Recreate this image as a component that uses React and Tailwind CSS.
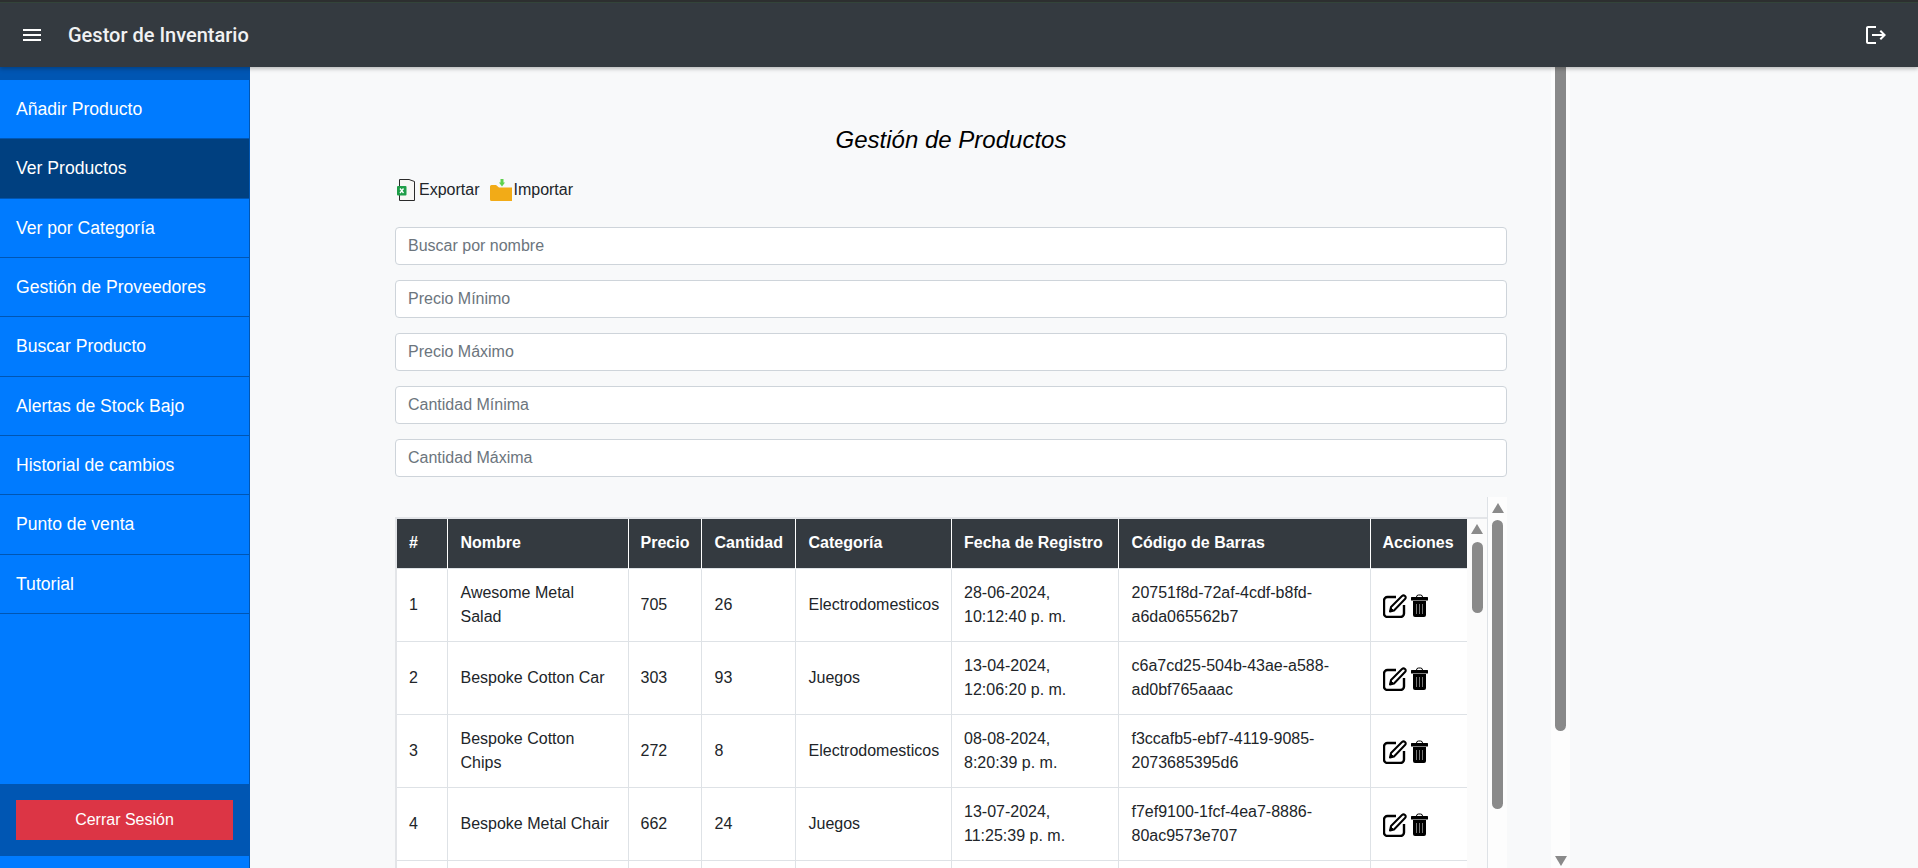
import { MdMenu, MdLogout } from 'react-icons/md'

const menu = [
  'Añadir Producto',
  'Ver Productos',
  'Ver por Categoría',
  'Gestión de Proveedores',
  'Buscar Producto',
  'Alertas de Stock Bajo',
  'Historial de cambios',
  'Punto de venta',
  'Tutorial'
]

const filters = ['Buscar por nombre', 'Precio Mínimo', 'Precio Máximo', 'Cantidad Mínima', 'Cantidad Máxima']

const columns = [
  ['#', 'w-[50px] pl-3'],
  ['Nombre', 'w-[181px] pl-[13px]'],
  ['Precio', 'w-[73px] pl-3'],
  ['Cantidad', 'w-[94px] pl-[13px]'],
  ['Categoría', 'w-[156px] pl-[13px]'],
  ['Fecha de Registro', 'w-[167px] pl-[12.5px]'],
  ['Código de Barras', 'w-[252px] pl-[13px]'],
  ['Acciones', 'w-[97px] pl-3']
]

const products = [
  ['1', 'Awesome Metal Salad', '705', '26', 'Electrodomesticos', '28-06-2024, 10:12:40 p. m.', '20751f8d-72af-4cdf-b8fd-a6da065562b7'],
  ['2', 'Bespoke Cotton Car', '303', '93', 'Juegos', '13-04-2024, 12:06:20 p. m.', 'c6a7cd25-504b-43ae-a588-ad0bf765aaac'],
  ['3', 'Bespoke Cotton Chips', '272', '8', 'Electrodomesticos', '08-08-2024, 8:20:39 p. m.', 'f3ccafb5-ebf7-4119-9085-2073685395d6'],
  ['4', 'Bespoke Metal Chair', '662', '24', 'Juegos', '13-07-2024, 11:25:39 p. m.', 'f7ef9100-1fcf-4ea7-8886-80ac9573e707']
]

function ExcelIcon() {
  return (
    <svg width="20" height="24" viewBox="0 0 20 24">
      <path d="M4.5 1.5 H14 L19.5 3.5 V22.5 H4.5 Z" fill="#f7f7f5" stroke="#2a2a2a" strokeWidth="1" />
      <rect x="2" y="8" width="9.5" height="9.5" rx="1" fill="#1e9e48" />
      <path d="M5 10.5 L8.5 15 M8.5 10.5 L5 15" stroke="#fff" strokeWidth="1.3" />
    </svg>
  )
}

function FolderIcon() {
  return (
    <svg width="22" height="24" viewBox="0 0 22 24">
      <path d="M0 8.5 Q0 7 1.5 7 H6 L9 9.5 H22 V23 H1.5 Q0 23 0 21.5 Z" fill="#f2ab17" />
      <path d="M10.5 1 H13.5 V4.5 H15 L12 8.5 L9 4.5 H10.5 Z" fill="#5fd14f" />
    </svg>
  )
}

function EditIcon() {
  return (
    <svg width="24" height="24" viewBox="0 0 24 24" fill="none" stroke="#000">
      <path d="M13 3 H4.5 A3.5 3.5 0 0 0 1 6.5 V19.5 A3.5 3.5 0 0 0 4.5 23 H17.5 A3.5 3.5 0 0 0 21 19.5 V11" strokeWidth="2.4" />
      <path d="M7 17.5 L8 13 L19 2 Q20.5 0.8 22 2 Q23.5 3.5 22 5 L11 16.5 Z" fill="#fff" strokeWidth="2" strokeLinejoin="round" />
      <path d="M7 17.5 L8 14 L10.5 16.5 Z" fill="#000" strokeWidth="1" />
    </svg>
  )
}

function TrashIcon() {
  return (
    <svg width="17" height="24" viewBox="0 0 17 24">
      <path d="M5.5 3 Q5.5 1 7.5 1 H9.5 Q11.5 1 11.5 3" fill="none" stroke="#000" strokeWidth="1" />
      <rect x="0" y="3" width="17" height="3.5" rx="0.5" fill="#000" />
      <path d="M2 7 H15 V21 Q15 23 13 23 H4 Q2 23 2 21 Z" fill="#000" />
      <path d="M5.5 10 V20 M8.5 10 V20 M11.5 10 V20" stroke="#777" strokeWidth="1" />
    </svg>
  )
}

function ArrowUp() {
  return <div className="h-0 w-0 border-x-[6.5px] border-b-[10px] border-x-transparent border-b-[#8a8a8a]" />
}

function ArrowDown() {
  return <div className="h-0 w-0 border-x-[6.5px] border-t-[10px] border-x-transparent border-t-[#8a8a8a]" />
}

export default function App() {
  return (
    <div className="flex h-[868px] w-[1918px] flex-col overflow-hidden bg-[#f8f9fa] font-['Liberation_Sans',sans-serif] text-[16px] text-[#212529]">
      <header className="z-10 flex h-[67px] shrink-0 items-center justify-between border-t-2 border-[#2d2f30] bg-[#343a40] pl-5 pr-[30px] text-white shadow-[inset_0_1px_0_#33443a,0_2px_4px_rgba(0,0,0,0.25)]">
        <div className="flex items-center gap-6">
          <MdMenu size={24} />
          <span className="font-['Roboto',sans-serif] text-[20px] font-medium text-[#f1f2f3]">Gestor de Inventario</span>
        </div>
        <MdLogout size={24} />
      </header>

      <div className="flex min-h-0 flex-1">
        <aside className="flex w-[250px] shrink-0 flex-col justify-between border-r border-[#0056b3] bg-[#007bff] pb-3 text-white">
          <nav>
            <div className="h-[13px] bg-[#0056b3]" />
            {menu.map((item) => (
              <div
                key={item}
                className={`flex h-[59.33px] items-center border-b border-[#0056b3] px-4 text-[17.6px] ${item === 'Ver Productos' ? 'bg-[#004080]' : ''}`}
              >
                {item}
              </div>
            ))}
          </nav>
          <div className="bg-[#0056b3] p-4">
            <button className="h-10 w-[217px] bg-[#dc3545] text-white">Cerrar Sesión</button>
          </div>
        </aside>

        <main className="flex min-w-0 flex-1 items-start overflow-hidden">
          <div className="w-[1301px] shrink-0 pl-[145px] pr-[44px] pt-[59px]">
            <h2 className="text-center text-[24px] italic leading-[28px] text-black">Gestión de Productos</h2>

            <div className="mt-6 flex h-6 items-center">
              <div className="flex items-center">
                <ExcelIcon />
                <span className="ml-1">Exportar</span>
              </div>
              <div className="ml-[11px] flex items-center">
                <FolderIcon />
                <span className="ml-[1px]">Importar</span>
              </div>
            </div>

            <div className="mt-[25px] flex flex-col gap-[15px]">
              {filters.map((f) => (
                <input
                  key={f}
                  placeholder={f}
                  className="h-[38px] w-full rounded-[4px] border border-[#ced4da] bg-white px-3 placeholder:text-[#6c757d]"
                />
              ))}
            </div>

            <div className="mt-5 flex h-[372px]">
              <div className="w-[1093px] shrink-0 border-r border-[#dee2e6] pt-5">
                <div className="flex h-[352px] overflow-hidden border-l-2 border-t-2 border-[#e3e5e8]">
                  <table className="w-[1070px] shrink-0 table-fixed border-collapse self-start bg-white">
                    <thead>
                      <tr className="bg-[#343a40] text-white">
                        {columns.map(([name, cell]) => (
                          <th key={name} className={`${cell} h-[49px] border-x border-white pr-3 text-left font-bold first:border-l-0 last:border-r-0`}>
                            {name}
                          </th>
                        ))}
                      </tr>
                    </thead>
                    <tbody>
                      {products.map((p) => (
                        <tr key={p[0]}>
                          {p.map((value, i) => (
                            <td key={i} className={`${columns[i][1]} h-[73px] border border-[#dee2e6] py-3 pr-3 first:border-l-0`}>
                              {value}
                            </td>
                          ))}
                          <td className="h-[73px] border border-[#dee2e6] py-3 pl-3 pr-3 last:border-r-0">
                            <div className="flex items-center gap-1 pt-[3px]">
                              <EditIcon />
                              <TrashIcon />
                            </div>
                          </td>
                        </tr>
                      ))}
                      <tr>
                        {columns.map(([name]) => (
                          <td key={name} className="h-[73px] border border-[#dee2e6] first:border-l-0 last:border-r-0" />
                        ))}
                      </tr>
                    </tbody>
                  </table>
                  <div className="flex w-5 shrink-0 flex-col items-center bg-[#fbfbfb] pt-[5px]">
                    <ArrowUp />
                    <div className="mt-[8px] h-[71px] w-[11px] rounded-full bg-[#8a8a8a]" />
                  </div>
                </div>
              </div>
              <div className="flex w-[19px] shrink-0 flex-col items-center bg-[#fdfdfd] pt-[6px]">
                <ArrowUp />
                <div className="mt-[7px] h-[289px] w-[11px] rounded-full bg-[#8a8a8a]" />
              </div>
            </div>
          </div>

          <div className="flex h-[801px] w-[19px] shrink-0 flex-col items-center justify-between bg-[#fdfdfd] pb-[2px]">
            <div className="h-[664px] w-[11px] rounded-b-full bg-[#8a8a8a]" />
            <ArrowDown />
          </div>
        </main>
      </div>
    </div>
  )
}
